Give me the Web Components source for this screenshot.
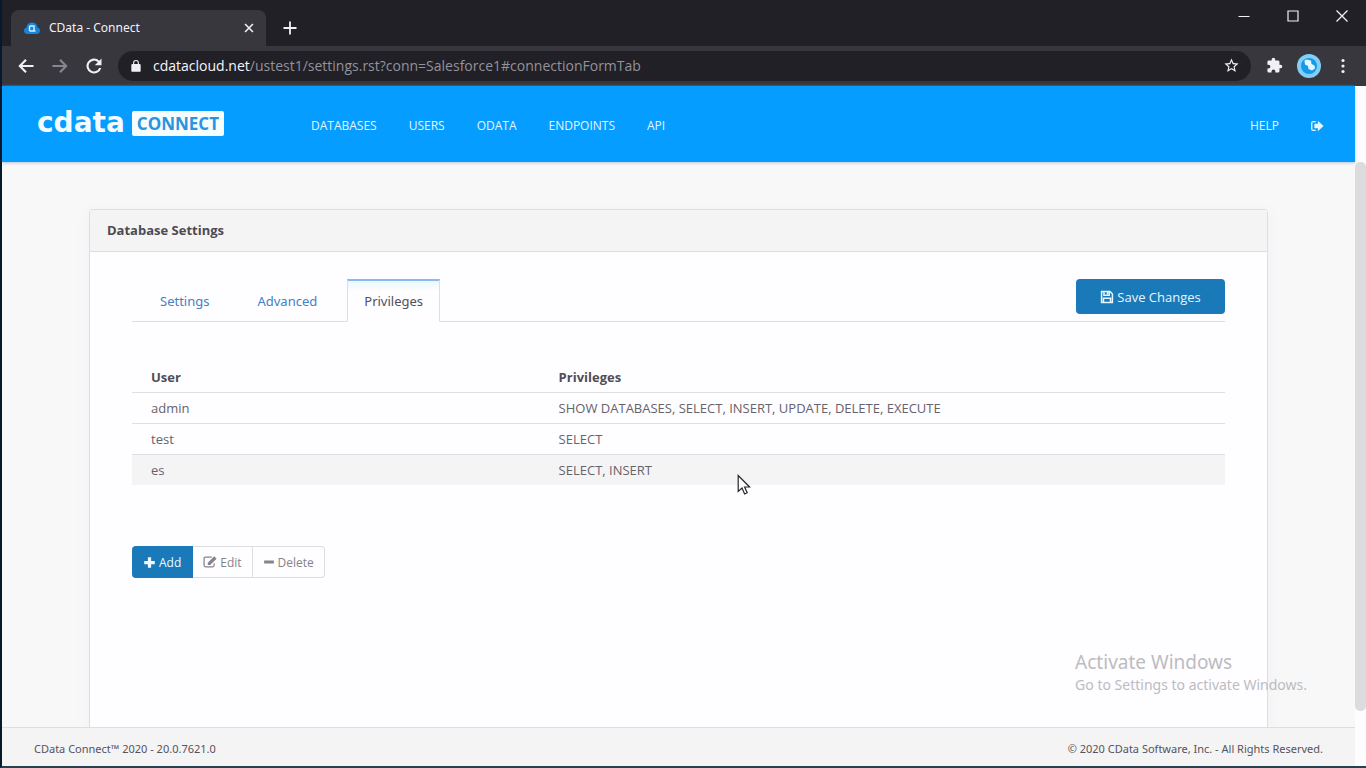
<!DOCTYPE html>
<html lang="en">
<head>
<meta charset="utf-8">
<title>CData - Connect</title>
<style>
  body { margin: 0; font-family: "Open Sans", "Noto Sans", sans-serif; font-size: 13px; color: #65636c; }
</style>
</head>
<body>
<browser-window>
  <window-bar slot="chrome" label="CData - Connect"></window-bar>
  <address-bar slot="chrome"></address-bar>
  <site-header>
    <nav-link href="#databases">DATABASES</nav-link>
    <nav-link href="#users">USERS</nav-link>
    <nav-link href="#odata">ODATA</nav-link>
    <nav-link href="#endpoints">ENDPOINTS</nav-link>
    <nav-link href="#api">API</nav-link>
    <nav-link slot="end" href="#help">HELP</nav-link>
    <nav-link slot="end" href="#logout" label="Log out"><ui-icon name="signout" size="14"></ui-icon></nav-link>
  </site-header>
  <settings-card>
    <span slot="title">Database Settings</span>
    <tab-bar></tab-bar>
    <privilege-table></privilege-table>
    <row-actions></row-actions>
  </settings-card>
  <site-footer>
    <span>CData Connect™ 2020 - 20.0.7621.0</span>
    <span>© 2020 CData Software, Inc. - All Rights Reserved.</span>
  </site-footer>
  <activation-notice slot="overlay"></activation-notice>
  <mouse-pointer slot="overlay"></mouse-pointer>
</browser-window>

<script>
const ICONS = {
  cloud: ['0 0 16 16', '<path fill="#1686dc" d="M3.500 14C1.500 14 0 12.600 0 10.700c0-1.700 1.100-2.900 2.500-3.200C2.800 4.300 5 2.500 8 2.500s5.200 1.800 5.500 5c1.400.3 2.500 1.500 2.500 3.200 0 1.900-1.500 3.300-3.500 3.300z"/><path fill="none" stroke="#d8f1ff" stroke-width="1.400" d="M10 6H6.500Q5.500 6 5.500 7v3q0 1 1 1H10zM10 11h1.500"/>'],
  close: ['0 0 16 16', '<path stroke="currentColor" stroke-width="1.800" d="M3.500 3.500l9 9M12.500 3.500l-9 9"/>'],
  plusThin: ['0 0 16 16', '<path stroke="currentColor" stroke-width="1.800" d="M8 1.500v13M1.500 8h13"/>'],
  minimize: ['0 0 16 16', '<path stroke="currentColor" d="M2.500 8.500h11"/>'],
  maximize: ['0 0 16 16', '<path fill="none" stroke="currentColor" stroke-width="1.200" d="M3 3h10v10H3z"/>'],
  closeWin: ['0 0 16 16', '<path stroke="currentColor" stroke-width="1.300" d="M2.500 2.500l11 11M13.500 2.500l-11 11"/>'],
  back: ['0 0 24 24', '<path fill="currentColor" d="M22 10.700H7L13 4.700 11 2.800 1.800 12l9.200 9.200 2-1.900-6-6h15z"/>'],
  forward: ['0 0 24 24', '<path fill="currentColor" d="M2 10.700h15L11 4.700l2-1.900 9.200 9.200-9.200 9.200-2-1.900 6-6H2z"/>'],
  reload: ['0 0 24 24', '<path fill="currentColor" d="M19.100 4.900A10 10 0 1 0 21.700 14.500h-2.900A7.200 7.200 0 1 1 17.100 6.900L13 11h9V2z"/>'],
  lock: ['0 0 24 24', '<path fill="currentColor" d="M18 8.500h-1V6.500a5 5 0 0 0-10 0v2H6a2 2 0 0 0-2 2V20a2 2 0 0 0 2 2h12a2 2 0 0 0 2-2v-9.500a2 2 0 0 0-2-2zm-2.900 0H8.900v-2a3.100 3.100 0 0 1 6.200 0z"/>'],
  star: ['0 0 24 24', '<path fill="currentColor" d="M22 9.240l-7.190-.62L12 2 9.190 8.630 2 9.240l5.460 4.730L5.820 21 12 17.270 18.180 21l-1.630-7.030zM12 15.400l-3.760 2.270 1-4.280-3.320-2.880 4.380-.38L12 6.100l1.710 4.040 4.380.38-3.320 2.880 1 4.280z"/>'],
  puzzle: ['0 0 24 24', '<path fill="currentColor" d="M20.500 11H19V7a2 2 0 0 0-2-2h-4V3.500a2.500 2.500 0 0 0-5 0V5H4a2 2 0 0 0-2 2v3.800h1.500a2.700 2.700 0 0 1 0 5.400H2V20a2 2 0 0 0 2 2h3.800v-1.500a2.700 2.700 0 0 1 5.400 0V22H17a2 2 0 0 0 2-2v-4h1.500a2.500 2.500 0 0 0 0-5z"/>'],
  profile: ['0 0 24 24', '<circle cx="12" cy="12" r="12" fill="#83cef8"/><circle cx="12" cy="12" r="8" fill="#139be9"/><path fill="#e4f6ff" d="M7.500 6.500l2-1 4.500 1 .5 3.500 3 1.500.5 3-3 2-3.500-1.500-.5-3-3-1.500z"/>'],
  dots: ['0 0 16 16', '<circle cx="8" cy="2.500" r="1.600" fill="currentColor"/><circle cx="8" cy="8" r="1.600" fill="currentColor"/><circle cx="8" cy="13.500" r="1.600" fill="currentColor"/>'],
  signout: ['0 0 16 16', '<path fill="none" stroke="currentColor" stroke-width="1.500" d="M6.500 3H3.500Q2 3 2 4.500v7Q2 13 3.500 13h3"/><path fill="currentColor" d="M5 5.500h4V2L15.500 8 9 14v-3.500H5z"/>'],
  save: ['0 0 16 16', '<path fill="none" stroke="currentColor" stroke-width="1.700" d="M1.800 1.800h9.700l2.700 2.700v9.700H1.800zM4.500 2v4h6V2M4 14v-4.500h8V14"/><path fill="currentColor" d="M7.700 2h2v3h-2z"/>'],
  plus: ['0 0 16 16', '<path fill="currentColor" d="M6 1.500h4V6h4.500v4H10v4.500H6V10H1.500V6H6z"/>'],
  edit: ['0 0 16 16', '<path fill="none" stroke="currentColor" stroke-width="1.400" d="M10 2.500H3Q1.200 2.500 1.200 4.200v7.600q0 1.700 1.800 1.700h8q1.700 0 1.700-1.700V9.500"/><path fill="currentColor" d="M5.500 11.500V8.800L12.800 1.500l2.700 2.700-7.300 7.300z"/>'],
  minus: ['0 0 16 16', '<path fill="currentColor" d="M1.500 6h13v4h-13z"/>'],
  pointer: ['0 0 14 22', '<path fill="#fff" stroke="#26242b" stroke-width="1.200" d="M1.200 1.500v16l3.800-3.500 2.600 6 2.600-1.200-2.600-5.800h5z"/>']
};

const define = (name, template) => customElements.define(name, class extends HTMLElement {
  connectedCallback() {
    if (this.shadowRoot) return;
    const root = this.attachShadow({ mode: 'open' });
    root.innerHTML = typeof template === 'function' ? template(this) : template;
  }
});

define('ui-icon', host => {
  const [box, art] = ICONS[host.getAttribute('name')];
  const size = host.getAttribute('size') || 16;
  return `<style>:host{display:inline-flex;flex:none}svg{display:block}</style>
    <svg width="${size}" height="${size}" viewBox="${box}" aria-hidden="true">${art}</svg>`;
});

define('browser-window', `
  <style>
    :host { display: flex; flex-direction: column; position: relative; height: 100vh; box-sizing: border-box;
      border-left: 2px solid #071a2c; border-bottom: 2px solid #25424f; overflow: hidden; background: #202026; }
    .view { flex: 1; min-height: 0; display: flex; border-top: 1px solid #173f66; }
    .page { flex: 1; min-width: 0; display: flex; flex-direction: column; background: #f8f8f9; }
    .scroll { width: 11px; background: #fdfdff; display: grid; grid-template-rows: 76fr 549fr 55fr; }
    .thumb { grid-row: 2; background: #dcdcde; border-radius: 5px; }
  </style>
  <slot name="chrome"></slot>
  <div class="view"><div class="page"><slot></slot></div><div class="scroll"><div class="thumb"></div></div></div>
  <slot name="overlay"></slot>`);

define('window-bar', host => `
  <style>
    :host { display: flex; justify-content: space-between; height: 46px; background: #202026; color: #f1f0f5; }
    button { all: unset; display: flex; }
    .left { display: flex; align-items: center; gap: 16px; padding: 10px 0 0 9px; }
    .tab { display: flex; align-items: center; gap: 9px; width: 255px; height: 36px; box-sizing: border-box; padding: 0 10px 0 13px;
      background: #38373e; border-radius: 8px 8px 0 0; font: 12px/34px "Noto Sans", sans-serif; }
    .tab span { flex: 1; }
    .controls { display: flex; gap: 33px; padding: 8px 16px 0 0; align-items: flex-start; }
  </style>
  <div class="left">
    <div class="tab"><ui-icon name="cloud"></ui-icon><span>${host.getAttribute('label')}</span>
      <button aria-label="Close tab"><ui-icon name="close" size="14"></ui-icon></button></div>
    <button aria-label="New tab"><ui-icon name="plusThin"></ui-icon></button>
  </div>
  <div class="controls">
    <button aria-label="Minimize"><ui-icon name="minimize"></ui-icon></button>
    <button aria-label="Maximize"><ui-icon name="maximize"></ui-icon></button>
    <button aria-label="Close"><ui-icon name="closeWin"></ui-icon></button>
  </div>`);

define('address-bar', `
  <style>
    :host { display: flex; align-items: center; height: 39px; box-sizing: border-box; padding: 0 15px; background: #38373e; color: #f1f0f5; }
    button { all: unset; display: flex; }
    .nav { display: flex; gap: 16px; margin-right: 15px; }
    .dim { color: #87868e; }
    .field { flex: 1; display: flex; align-items: center; gap: 10px; height: 30px; padding: 0 11px; border-radius: 15px; background: #202026; }
    .url { flex: 1; font-size: 14px; line-height: 20px; color: #94929b; }
    .url b { font-weight: 400; color: #f6f5fa; }
    .tools { display: flex; align-items: center; gap: 14px; margin-left: 15px; }
  </style>
  <div class="nav">
    <button aria-label="Back"><ui-icon name="back" size="18"></ui-icon></button>
    <button class="dim" aria-label="Forward"><ui-icon name="forward" size="18"></ui-icon></button>
    <button aria-label="Reload"><ui-icon name="reload" size="18"></ui-icon></button>
  </div>
  <div class="field">
    <ui-icon name="lock" size="14"></ui-icon>
    <div class="url"><b>cdatacloud.net</b>/ustest1/settings.rst?conn=Salesforce1#connectionFormTab</div>
    <button aria-label="Bookmark"><ui-icon name="star" size="17"></ui-icon></button>
  </div>
  <div class="tools">
    <button aria-label="Extensions"><ui-icon name="puzzle" size="17"></ui-icon></button>
    <button aria-label="Profile"><ui-icon name="profile" size="24"></ui-icon></button>
    <button aria-label="Menu"><ui-icon name="dots"></ui-icon></button>
  </div>`);

define('site-header', `
  <style>
    :host { display: flex; align-items: center; height: 76px; flex: none; box-sizing: border-box; padding: 0 31px 0 35px;
      background: #059dff; color: #e4f6ff; box-shadow: 0 1px 3px #b8c4d4; position: relative; }
    .brand { display: flex; align-items: center; gap: 7px; width: 274px; color: #f2fbff; text-decoration: none; padding-bottom: 2px; }
    .word { font: bold 28px/30px "DejaVu Sans", sans-serif; }
    .badge { background: #f5fdff; color: #2c94dc; font-size: 17px; line-height: 25px; font-weight: 700; padding: 0 5px; border-radius: 2px; }
    nav { display: flex; gap: 32px; padding-top: 3px; }
    .end { margin-left: auto; align-items: center; gap: 31px; }
  </style>
  <a class="brand" href="#home"><span class="word">cdata</span><span class="badge">CONNECT</span></a>
  <nav><slot></slot></nav>
  <nav class="end"><slot name="end"></slot></nav>`);

define('nav-link', host => `
  <style>
    :host { display: block; }
    a { display: flex; color: inherit; text-decoration: none; font-size: 12px; line-height: 20px; align-items: center; }
  </style>
  <a href="${host.getAttribute('href')}"${host.hasAttribute('label') ? ` aria-label="${host.getAttribute('label')}"` : ''}><slot></slot></a>`);

define('settings-card', `
  <style>
    :host { display: flex; flex-direction: column; flex: 1; min-height: 0; margin: 47px 87px 0; border: 1px solid #dedee1; border-bottom: 0;
      border-radius: 4px 4px 0 0; background: #fefdff; box-shadow: 0 4px 16px #f0f0f3; }
    h1 { margin: 0; padding: 0 17px; font-size: 13px; line-height: 41px; font-weight: 700; color: #4d4b52; background: #f4f4f5; border-bottom: 1px solid #dedee1; }
    .body { padding: 27px 42px; }
  </style>
  <h1><slot name="title"></slot></h1>
  <div class="body"><slot></slot></div>`);

define('tab-bar', `
  <style>
    :host { display: flex; justify-content: space-between; align-items: flex-start; border-bottom: 1px solid #dedee1; height: 42px; }
    nav { display: flex; gap: 12px; padding-left: 10px; }
    a { box-sizing: border-box; height: 43px; padding: 0 17px; border: 1px solid transparent; border-top-width: 2px; color: #4580c4;
      text-decoration: none; font: 13px/40px "Noto Sans", sans-serif; }
    a[aria-current] { padding: 0 16px; color: #514f59; background: linear-gradient(#eaf7ff, #fefdff 10px); border-color: #8db9ea #dedee1 #fefdff; }
    button { font: inherit; font-size: 13px; height: 35px; width: 149px; display: flex; align-items: center; justify-content: center; gap: 3px;
      background: #1a79b8; color: #e6f6ff; border: 0; border-radius: 4px; }
  </style>
  <nav><a href="#settings">Settings</a><a href="#advanced">Advanced</a><a href="#privileges" aria-current="page">Privileges</a></nav>
  <button><ui-icon name="save" size="14"></ui-icon>Save Changes</button>`);

define('privilege-table', () => {
  const rows = [['admin', 'SHOW DATABASES, SELECT, INSERT, UPDATE, DELETE, EXECUTE'], ['test', 'SELECT'], ['es', 'SELECT, INSERT']];
  return `<style>
    :host { display: block; margin-top: 40px; }
    table { width: 100%; border-collapse: collapse; table-layout: fixed; }
    th, td { text-align: left; padding: 0 17px 0 19px; height: 30px; line-height: 30px; font-size: 13px; }
    th { color: #504e56; font-weight: 700; } th:first-child { width: 34%; }
    td { border-top: 1px solid #dfdfe3; }
    .active { background: #f4f4f5; }
  </style>
  <table><thead><tr><th>User</th><th>Privileges</th></tr></thead><tbody>${rows.map(([u, p], i) =>
    `<tr${i === 2 ? ' class="active"' : ''}><td>${u}</td><td>${p}</td></tr>`).join('')}</tbody></table>`;
});

define('row-actions', `
  <style>
    :host { display: flex; margin-top: 61px; }
    button { font: inherit; font-size: 12px; display: flex; align-items: center; justify-content: center; gap: 3px; height: 32px; padding: 0 10px;
      border: 1px solid #dedee1; border-left: 0; background: #fefdff; color: #85838a; }
    .add { background: #1a79b8; color: #eef9ff; border-color: #1a79b8; border-radius: 4px 0 0 4px; padding: 0 11px; }
    .last { border-radius: 0 4px 4px 0; }
  </style>
  <button class="add"><ui-icon name="plus" size="13"></ui-icon>Add</button>
  <button disabled><ui-icon name="edit" size="14"></ui-icon>Edit</button>
  <button class="last" disabled><ui-icon name="minus" size="12"></ui-icon>Delete</button>`);

define('site-footer', `
  <style>
    :host { display: flex; justify-content: space-between; align-items: center; flex: none; height: 39px; box-sizing: border-box;
      position: relative; padding: 2px 32px 0; border-top: 1px solid #dedee1; background: #f4f4f5; font: 11px "Noto Sans", sans-serif; color: #55535b; }
  </style><slot></slot>`);

define('activation-notice', `
  <style>
    :host { position: absolute; right: 59px; bottom: 71px; color: #bcbcbf; pointer-events: none; font-family: "Noto Sans", sans-serif; }
    strong { display: block; font-weight: 400; font-size: 19px; line-height: 25px; }
    span { display: block; font-size: 14px; line-height: 20px; }
  </style>
  <strong>Activate Windows</strong><span>Go to Settings to activate Windows.</span>`);

define('mouse-pointer', `
  <style>:host { position: absolute; left: 731px; top: 474px; pointer-events: none; }</style>
  <ui-icon name="pointer" size="22"></ui-icon>`);
</script>
</body>
</html>
